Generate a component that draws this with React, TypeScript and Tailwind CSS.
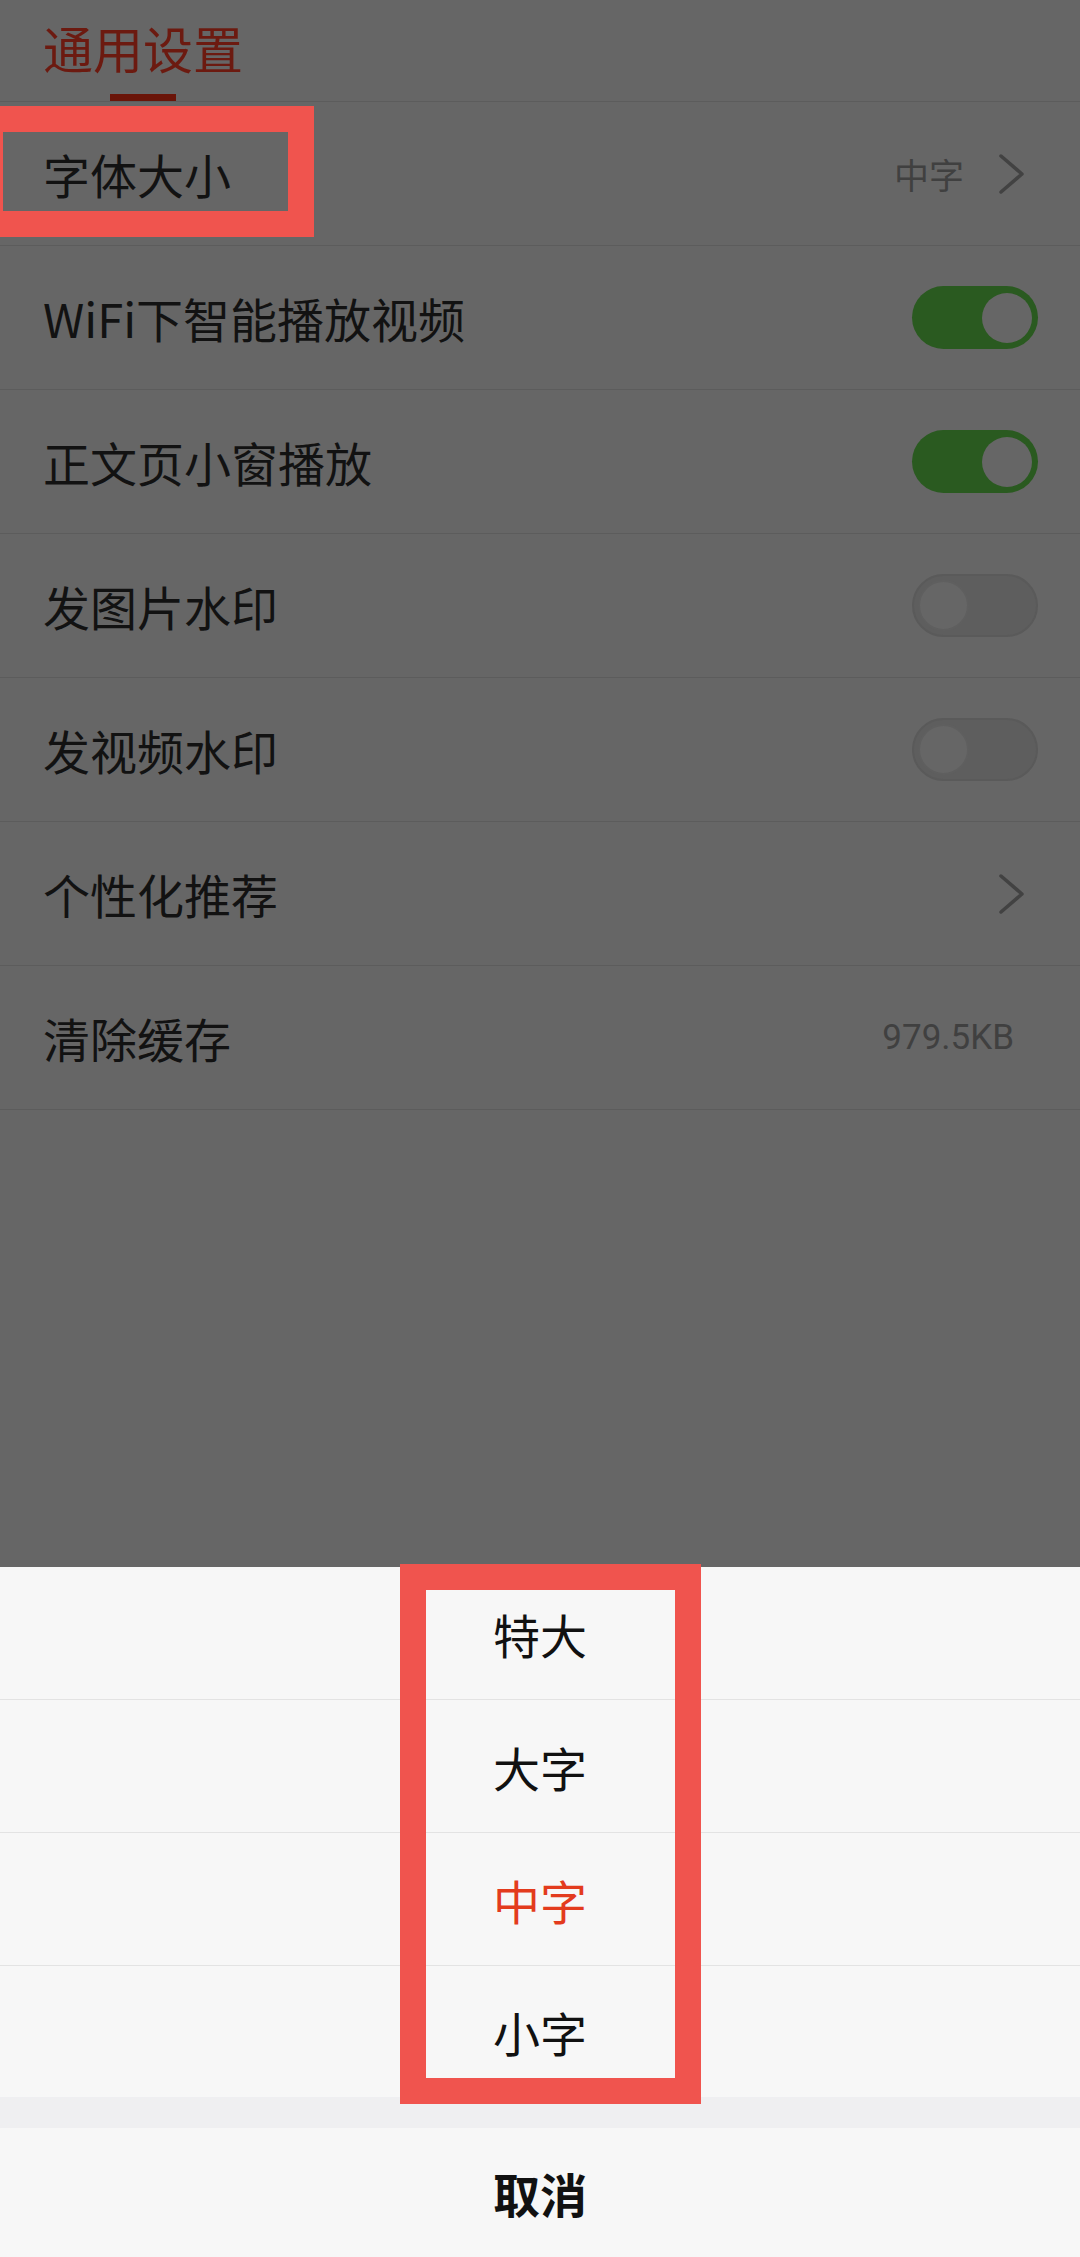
import React from 'react';

const font = { fontFamily: '"Noto Sans CJK SC", "Noto Sans", sans-serif' };

type Row = { label: string; kind: 'value' | 'on' | 'off' | 'chevron' | 'size'; value?: string };

const rows: Row[] = [
  { label: '字体大小', kind: 'value', value: '中字' },
  { label: 'WiFi下智能播放视频', kind: 'on' },
  { label: '正文页小窗播放', kind: 'on' },
  { label: '发图片水印', kind: 'off' },
  { label: '发视频水印', kind: 'off' },
  { label: '个性化推荐', kind: 'chevron' },
  { label: '清除缓存', kind: 'size', value: '979.5KB' },
];

const sizes = ['特大', '大字', '中字', '小字'];

const Chevron = () => (
  <svg width="27" height="40" viewBox="0 0 27 40" fill="none" className="shrink-0">
    <polyline points="3,2 24,20 3,38" stroke="#424242" strokeWidth="3.5" strokeLinecap="round" strokeLinejoin="round" />
  </svg>
);

const Toggle = ({ on }: { on: boolean }) =>
  on ? (
    <div className="flex h-[63px] w-[126px] items-center justify-end rounded-full bg-[#2a5a20] pr-[6px]">
      <div className="h-[50px] w-[50px] rounded-full bg-[#666666]" />
    </div>
  ) : (
    <div className="flex h-[63px] w-[126px] items-center justify-start rounded-full border-2 border-[#5a5a5a] bg-[#5e5e5e] pl-[4px]">
      <div className="h-[51px] w-[51px] rounded-full border-2 border-[#5f5f5f] bg-[#666666]" />
    </div>
  );

export default function App() {
  return (
    <div className="relative flex h-[2257px] w-[1080px] flex-col overflow-hidden bg-[#666666]" style={font}>
      {/* Header */}
      <div className="flex h-[102px] shrink-0 border-b border-[#5c5c5c]">
        <div className="ml-[43px] flex flex-col items-center">
          <span className="pt-[21px] text-[50px] leading-[52px] text-[#6c1a10]">通用设置</span>
          <div className="flex-1" />
          <div className="h-[7px] w-[66px] bg-[#6a1408]" />
        </div>
      </div>

      {/* Settings list */}
      {rows.map((row) => (
        <div key={row.label} className="flex h-[144px] shrink-0 items-center justify-between border-b border-[#5c5c5c] pl-[43px]">
          <span className="text-[47px] leading-none text-[#121212]">{row.label}</span>
          {row.kind === 'value' && (
            <div className="mr-[55px] flex items-center gap-[34px]">
              <span className="text-[35px] leading-none text-[#404040]">{row.value}</span>
              <Chevron />
            </div>
          )}
          {row.kind === 'on' && (
            <div className="mr-[42px]">
              <Toggle on />
            </div>
          )}
          {row.kind === 'off' && (
            <div className="mr-[42px]">
              <Toggle on={false} />
            </div>
          )}
          {row.kind === 'chevron' && (
            <div className="mr-[55px]">
              <Chevron />
            </div>
          )}
          {row.kind === 'size' && (
            <span className="mr-[66px] text-[35px] leading-none text-[#404040]" style={{ fontFamily: 'Roboto, "Noto Sans", sans-serif' }}>
              {row.value}
            </span>
          )}
        </div>
      ))}

      {/* Bottom action sheet */}
      <div className="mt-auto flex flex-col bg-[#f7f7f7]">
        {sizes.map((s, i) => (
          <div
            key={s}
            className={`flex items-center justify-center text-[47px] leading-none ${
              i < 3 ? 'h-[133px] border-b border-[#e3e3e3]' : 'h-[131px]'
            } ${s === '中字' ? 'text-[#e33b1d]' : 'text-[#111111]'}`}
          >
            {s}
          </div>
        ))}
        <div className="h-[31px] bg-[#efeff1]" />
        <div className="flex h-[129px] items-center justify-center text-[47px] font-bold leading-none text-[#111111]">取消</div>
      </div>

      {/* Annotation boxes */}
      <div className="pointer-events-none absolute left-0 top-[106px] h-[131px] w-[314px] border-y-[26px] border-l-[3px] border-r-[26px] border-[#f0544e]" />
      <div className="pointer-events-none absolute left-[400px] top-[1564px] h-[540px] w-[301px] border-[26px] border-[#f0544e]" />
    </div>
  );
}
